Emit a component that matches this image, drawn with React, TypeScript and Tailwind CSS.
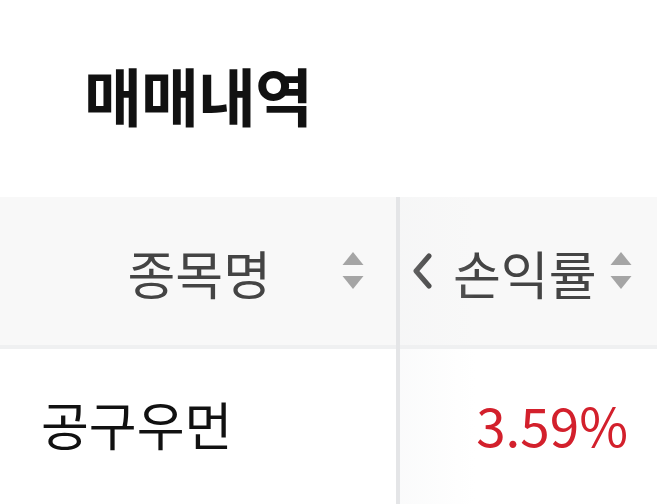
import React from "react";

const font = { fontFamily: '"Noto Sans CJK KR", "Noto Sans", sans-serif' };

function SortIcon() {
  return (
    <svg width="22" height="40" viewBox="0 0 22 40" className="shrink-0">
      <path d="M11 1 L21.5 14 L0.5 14 Z" fill="#a5a5a5" />
      <path d="M11 38 L21.5 25 L0.5 25 Z" fill="#a5a5a5" />
    </svg>
  );
}

export default function App() {
  return (
    <div className="w-[657px] h-[504px] overflow-hidden bg-white" style={font}>
      <div className="h-[197px] pl-[84px] pt-[54px]">
        <h1 className="text-[63px] leading-[80px] font-semibold text-[#111] tracking-[-1px]">매매내역</h1>
      </div>
      <div className="flex">
        <div className="w-[396px] shrink-0">
          <div className="h-[148px] bg-[#f8f8f8] flex items-center justify-end pr-[32px]">
            <span className="text-[52px] leading-none text-[#444] mt-[4px]">종목명</span>
            <div className="ml-[71px]">
              <SortIcon />
            </div>
          </div>
          <div className="h-[4px] bg-[#eff0f1]" />
          <div className="h-[155px] flex items-center pl-[41px]">
            <span className="text-[52px] leading-none text-[#111] mt-[-6px]">공구우먼</span>
          </div>
        </div>
        <div className="w-[4px] shrink-0 bg-[#e4e5e7]" />
        <div className="flex-1 relative">
          <div className="absolute left-0 top-0 bottom-0 w-[75px] bg-gradient-to-r from-[#f3f4f5] to-transparent opacity-40" />
          <div className="h-[148px] bg-[#f8f8f8] flex items-center pl-[11px]">
            <svg width="22" height="36" viewBox="0 0 22 36" className="shrink-0">
              <path d="M18 3 L5 18 L18 33" fill="none" stroke="#1a1a1a" strokeWidth="5" strokeLinecap="round" strokeLinejoin="round" />
            </svg>
            <span className="ml-[20px] text-[52px] leading-none text-[#444] mt-[4px]">손익률</span>
            <div className="ml-[13px]">
              <SortIcon />
            </div>
          </div>
          <div className="h-[4px] bg-[#eff0f1] relative" />
          <div className="h-[155px] flex items-center justify-end pr-[29px] relative">
            <span className="text-[53px] leading-none text-[#d3202c] mt-[-4px]">3.59%</span>
          </div>
        </div>
      </div>
    </div>
  );
}
